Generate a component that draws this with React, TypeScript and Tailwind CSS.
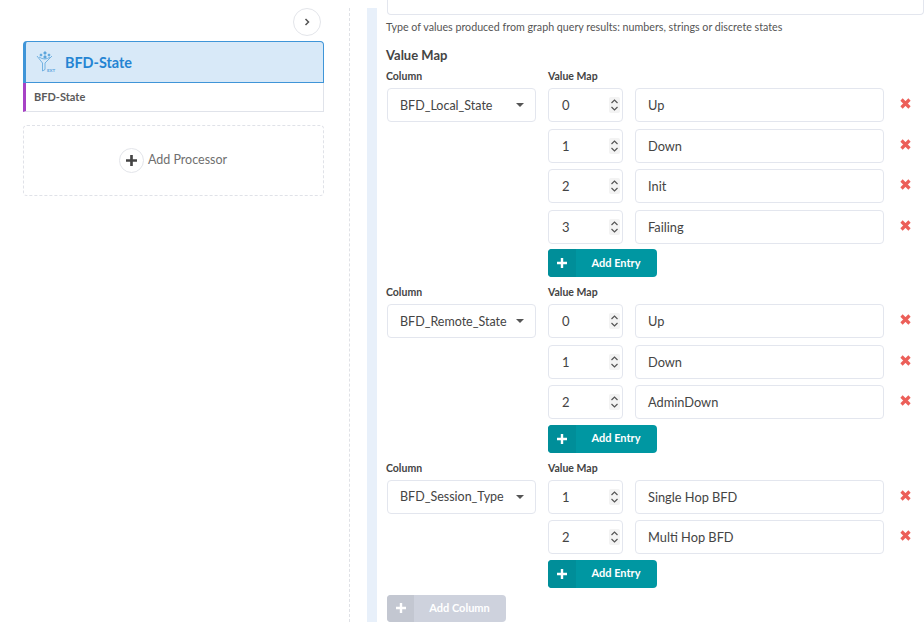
import React from "react";

const Spin = () => (
  <span className="flex h-[16px] w-[11px] shrink-0 items-center justify-center rounded-[2px] bg-[#f3f3f3]">
    <svg width="9" height="14" viewBox="0 0 9 14" fill="none" stroke="#555" strokeWidth="1.2">
      <path d="M1.5 5 L4.5 2 L7.5 5" />
      <path d="M1.5 9 L4.5 12 L7.5 9" />
    </svg>
  </span>
);

const Cross = () => (
  <svg width="11" height="11" viewBox="0 0 11 11" stroke="#ec5f59" strokeWidth="3.2" className="shrink-0">
    <path d="M1.5 1.5 L9.5 9.5 M9.5 1.5 L1.5 9.5" />
  </svg>
);

const Plus = ({ c = "#fff", s = 10 }: { c?: string; s?: number }) => (
  <svg width={s} height={s} viewBox="0 0 10 10" stroke={c} strokeWidth="2.4">
    <path d="M5 0 V10 M0 5 H10" />
  </svg>
);

const Row = ({ n, label }: { n: number; label: string }) => (
  <div className="flex h-[34px] items-stretch">
    <div className="flex w-[75px] items-center justify-between rounded-[4px] border border-[#e3e6ee] pl-[13px] pr-[2px] text-[13px] text-[#444]">
      <span className="pt-[2px]">{n}</span>
      <Spin />
    </div>
    <div className="ml-[12px] flex w-[249px] items-center rounded-[4px] border border-[#e3e6ee] pt-[2px] pl-[12px] text-[12.8px] text-[#444]">
      {label}
    </div>
    <div className="ml-[16px] flex items-center pb-[3px]">
      <Cross />
    </div>
  </div>
);

const AddBtn = ({ label, disabled, w }: { label: string; disabled?: boolean; w: number }) => (
  <div
    className={
      disabled
        ? "flex h-[27px] overflow-hidden rounded-[4px] bg-[#ced2dd] text-[11px] font-bold text-white"
        : "flex h-[28px] overflow-hidden rounded-[4px] bg-[#0097a2] text-[11px] font-bold text-white"
    }
    style={{ width: w }}
  >
    <div
      className={
        disabled
          ? "flex w-[27px] items-center justify-center bg-[#c3c7d1]"
          : "flex w-[28px] items-center justify-center bg-[#008e99]"
      }
    >
      <Plus />
    </div>
    <div className="flex flex-1 items-center justify-center pr-[1px]">{label}</div>
  </div>
);

const Group = ({ col, rows }: { col: string; rows: [number, string][] }) => (
  <div className="flex">
    <div className="w-[161px] shrink-0">
      <div className="mb-[6px] -ml-[1px] h-[12px] text-[10.5px] leading-[12px] font-bold text-[#444]">Column</div>
      <div className="flex h-[34px] w-[149px] items-center justify-between rounded-[4px] border border-[#e3e6ee] pl-[12px] pr-[11px] text-[12.5px] text-[#444]">
        <span className="pt-[2px]">{col}</span>
        <span className="h-0 w-0 border-x-[4px] border-t-[4px] border-x-transparent border-t-[#555]" />
      </div>
    </div>
    <div className="flex flex-col">
      <div className="mb-[6px] h-[12px] text-[10.5px] leading-[12px] font-bold text-[#444]">Value Map</div>
      <div className="flex flex-col gap-[6.5px]">
        {rows.map(([n, l]) => (
          <Row key={l} n={n} label={l} />
        ))}
      </div>
      <div className="mt-[5.5px]">
        <AddBtn label="Add Entry" w={109} />
      </div>
    </div>
  </div>
);

export default function App() {
  return (
    <div className="flex h-[632px] w-[924px] overflow-hidden bg-white font-['Lato','Liberation_Sans',sans-serif]">
      <aside className="mt-[8px] mb-[10px] flex w-[350px] shrink-0 flex-col items-start border-r border-dashed border-[#dfe1e6] pl-[23px]">
        <div className="flex h-[33px] w-[301px] justify-end pr-[3px]">
          <div className="flex h-[28px] w-[28px] items-center justify-center rounded-full border border-[#e3e5ea] bg-white">
            <svg width="6" height="8" viewBox="0 0 6 8" fill="none" stroke="#555" strokeWidth="1.5">
              <path d="M1.5 1 L4.5 4 L1.5 7" />
            </svg>
          </div>
        </div>
        <div className="flex h-[42px] w-[301px] items-center rounded-t-[4px] border border-l-[3px] border-[#3f95d8] bg-[#d8e9f8] pl-[10px]">
          <svg width="22" height="24" viewBox="0 0 22 24" fill="none" stroke="#5ba4dc" strokeWidth="0.8">
            <circle cx="5" cy="5" r="1" fill="#5ba4dc" />
            <circle cx="9" cy="3" r="1.2" fill="#5ba4dc" />
            <circle cx="9" cy="7" r="1.2" fill="#5ba4dc" />
            <circle cx="13" cy="5" r="1" fill="#5ba4dc" />
            <path d="M1 6 L6.5 13 V21 L9 19.5 V13 L16 6" />
            <path d="M3 7 Q9 11 14 7" />
            <text x="11" y="22" fontSize="4.5" fontWeight="700" fill="#5ba4dc" stroke="none">EXT</text>
          </svg>
          <span className="ml-[7px] pt-[2px] text-[14.4px] font-bold text-[#2484d3]">BFD-State</span>
        </div>
        <div className="flex h-[29px] w-[301px] items-center border-r border-b border-[#e0e3ea] border-l-[3px] border-l-[#a742c5] pl-[8px] text-[11px] font-bold text-[#5a5a5a]">
          BFD-State
        </div>
        <div className="mt-[13px] flex h-[71px] w-[301px] items-center justify-center rounded-[4px] border border-dashed border-[#e0e2e8]">
          <div className="mr-[4px] flex h-[25px] w-[25px] items-center justify-center rounded-full border border-[#e3e5ea]">
            <Plus c="#444" s={11} />
          </div>
          <span className="pr-[1px] text-[12.5px] text-[#6f6f6f]">Add Processor</span>
        </div>
      </aside>
      <div className="mt-[8px] mb-[10px] ml-[17px] w-[10px] shrink-0 bg-[#e8f0fa]" />
      <main className="flex-1 pl-[10px]">
        <div className="h-[15px] w-full rounded-b-[4px] border-x border-b border-[#e3e6ee]" />
        <div className="mt-[5px] -ml-[1px] h-[13px] text-[10.7px] leading-[13px] text-[#555]">
          Type of values produced from graph query results: numbers, strings or discrete states
        </div>
        <div className="mt-[14px] -ml-[1px] h-[16px] text-[13px] leading-[16px] font-bold text-[#444]">Value Map</div>
        <div className="mt-[7px] flex flex-col gap-[9px]">
          <Group col="BFD_Local_State" rows={[[0, "Up"], [1, "Down"], [2, "Init"], [3, "Failing"]]} />
          <Group col="BFD_Remote_State" rows={[[0, "Up"], [1, "Down"], [2, "AdminDown"]]} />
          <Group col="BFD_Session_Type" rows={[[1, "Single Hop BFD"], [2, "Multi Hop BFD"]]} />
        </div>
        <div className="mt-[7px]">
          <AddBtn label="Add Column" disabled w={119} />
        </div>
      </main>
    </div>
  );
}
